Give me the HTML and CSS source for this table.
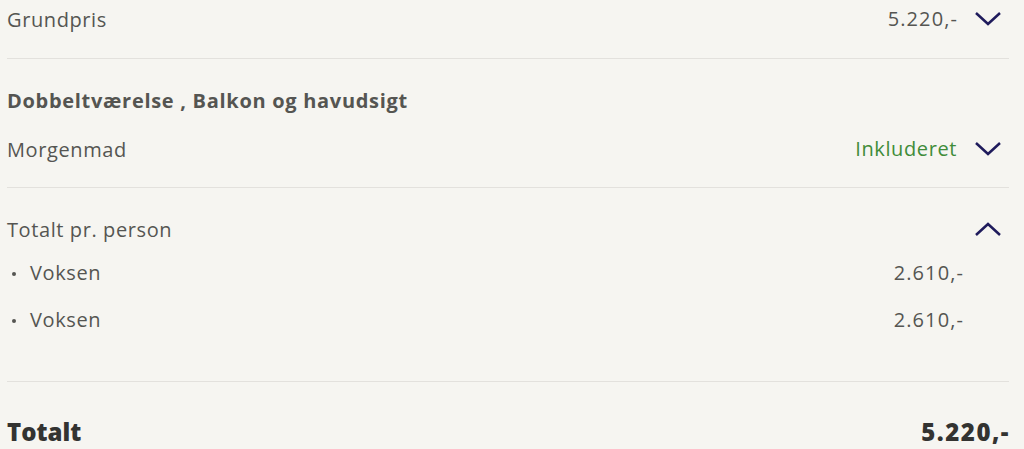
FILE: index.html
```html
<!DOCTYPE html>
<html lang="da">
<head>
<meta charset="utf-8">
<title>Prisoversigt</title>
<link rel="stylesheet" href="styles.css">
</head>
<body>
<div class="summary">
  <section class="section s1">
    <div class="row">
      <span class="label">Grundpris</span>
      <div class="right">
        <span class="value num">5.220,-</span>
        <svg class="chev" viewBox="0 0 28 16" width="28" height="16"><path d="M2 2 L14 13 L26 2" fill="none" stroke="#1f1b5c" stroke-width="2.5"/></svg>
      </div>
    </div>
  </section>
  <section class="section s2">
    <h3 class="heading">Dobbeltværelse , Balkon og havudsigt</h3>
    <div class="row morning">
      <span class="label">Morgenmad</span>
      <div class="right">
        <span class="value green">Inkluderet</span>
        <svg class="chev" viewBox="0 0 28 16" width="28" height="16"><path d="M2 2 L14 13 L26 2" fill="none" stroke="#1f1b5c" stroke-width="2.5"/></svg>
      </div>
    </div>
  </section>
  <section class="section s3">
    <div class="row">
      <span class="label">Totalt pr. person</span>
      <div class="right">
        <svg class="chev" viewBox="0 0 28 16" width="28" height="16"><path d="M2 14 L14 3 L26 14" fill="none" stroke="#1f1b5c" stroke-width="2.5"/></svg>
      </div>
    </div>
    <ul class="persons">
      <li class="person"><span class="label bullet">Voksen</span><span class="value num">2.610,-</span></li>
      <li class="person"><span class="label bullet">Voksen</span><span class="value num">2.610,-</span></li>
    </ul>
  </section>
  <div class="total">
    <span class="total-label">Totalt</span>
    <span class="total-value">5.220,-</span>
  </div>
</div>
</body>
</html>
```
FILE: styles.css
```css
html, body {
  margin: 0;
  padding: 0;
  background: #f6f5f1;
}
body {
  font-family: "Open Sans", "Liberation Sans", sans-serif;
  color: #555552;
  font-size: 20px;
  letter-spacing: 0.6px;
}
.summary {
  padding: 0 15px 0 7px;
}
.section {
  border-bottom: 1px solid #e3e1dd;
}
.row {
  display: flex;
  justify-content: space-between;
  align-items: center;
  height: 38px;
}
.right {
  display: flex;
  align-items: center;
}
.chev {
  display: block;
  margin-left: 17px;
  margin-right: 7px;
}
.value {
  line-height: 24px;
}
.num {
  letter-spacing: 1.1px;
  margin-right: -1px;
}
.green {
  color: #3f8c39;
}
.s1 {
  padding-bottom: 20px;
}
.s2 {
  padding-top: 30px;
  padding-bottom: 19px;
}
.heading {
  margin: 0;
  font-size: 20px;
  font-weight: 700;
  line-height: 24px;
  letter-spacing: 0.7px;
}
.morning {
  margin-top: 17px;
}
.s3 {
  padding-top: 22px;
  padding-bottom: 49px;
}
.persons {
  list-style: none;
  margin: 13px 0 0;
  padding: 0 46px 0 0;
  display: flex;
  flex-direction: column;
  gap: 23px;
}
.person {
  display: flex;
  justify-content: space-between;
  line-height: 24px;
}
.bullet {
  position: relative;
  padding-left: 23px;
}
.bullet::before {
  content: "";
  position: absolute;
  left: 5px;
  top: 11px;
  width: 4px;
  height: 4px;
  border-radius: 50%;
  background: #555552;
}
.total {
  display: flex;
  justify-content: space-between;
  padding-top: 36px;
  font-size: 24px;
  font-weight: 800;
  line-height: 28px;
  color: #333331;
  letter-spacing: 0;
}
.total-value {
  letter-spacing: 1.5px;
  margin-right: -1px;
}
```
